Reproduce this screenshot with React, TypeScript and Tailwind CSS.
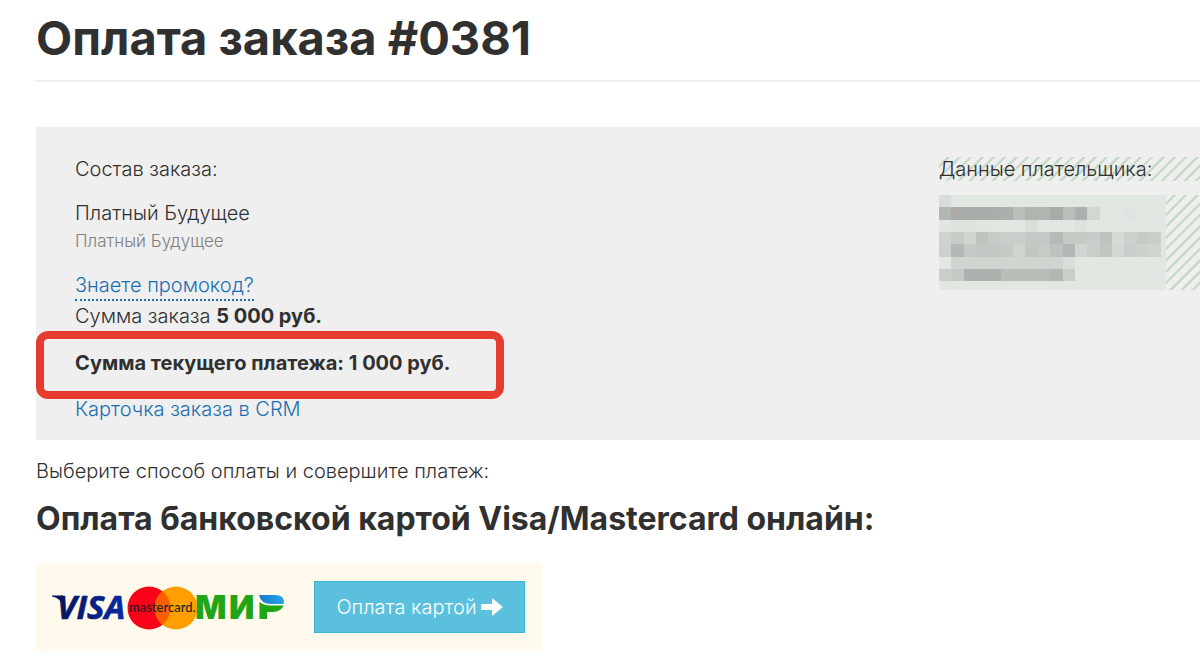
import React from 'react';

const maskRows = [
  ['#d8ddda'],
  ['#b2b7b2', '#abaaa8', '#a9adaa', '#a9adaa', '#a9aeaa', '#abb0ac', '#b9beb8', '#b1b5af', '#b1b5af', '#a8ada9', '#b9beb9', '#adb1ae', '#d2d7d2', '#e1e8e1', '#e1e8e1', '#dfe5e1'],
  ['#e1e6e0', '#dee3dd', '#dee3dd', '#e0e5df', '#e1e6e0', '#e1e8e1', '#e1e8e1', '#d9dfd9', '#e1e8e1', '#e1e8e1', '#e1e8e1', '#dce2dc'],
  ['#cdd3cf', '#c7cdc6', '#d0d6d0', '#bfc5be', '#c6ccc5', '#c8cec9', '#c9cfca', '#c3cac5', '#c3cac5', '#b4bab5', '#c5cac4', '#c5cac4', '#c7cdc8', '#bfc4bf', '#d4dad4', '#cbd1cb', '#c5cbc5', '#c9cfc9'],
  ['#cbd1cc', '#b3b9b4', '#c4cac4', '#c2c8c2', '#c2c8c3', '#c6ccc5', '#ced4ce', '#c1c7c1', '#c5cbc5', '#bdc3be', '#b2b9b5', '#d0d6d0', '#c9cfc8', '#c0c6c0', '#d2d8d2', '#cacfcb', '#ccd2cc', '#ced4ce'],
  ['#e1e8e1', '#cfd5cf', '#cfd5cf', '#cfd5cf', '#cfd5cf', '#cfd5cf', '#cfd5cf', '#cfd5cf', '#cfd5cf', '#cfd5cf', '#d8dedb'],
  ['#c8cec9', '#c4cac4', '#acb2ae', '#abb1ad', '#abb1ad', '#b7bdb7', '#b7bdb7', '#b7bdb7', '#b7bdb7', '#b1b7b2', '#c9cfc9'],
];

function MaskedDetails() {
  return (
    <svg className="block shrink-0" width="227" height="95" viewBox="0 0 227 95" shapeRendering="crispEdges" aria-hidden="true">
      <rect width="227" height="95" fill="#e1e8e1" />
      {maskRows.map((row, y) =>
        row.map((fill, x) => (
          <rect key={`${x}-${y}`} x={x * 12.35} y={y * 12.35} width="12.35" height="12.35" fill={fill} />
        ))
      )}
    </svg>
  );
}

function CardLogos() {
  return (
    <svg width="234" height="46" viewBox="0 0 234 46" role="img" aria-label="Visa, Mastercard, Мир">
      <defs>
        <linearGradient id="visa" x1="0" x2="1">
          <stop offset="0" stopColor="#06145c" />
          <stop offset="1" stopColor="#0a2aa5" />
        </linearGradient>
        <linearGradient id="mir" x1="0" x2="1">
          <stop offset="0" stopColor="#1a78d0" />
          <stop offset="1" stopColor="#27a5e8" />
        </linearGradient>
      </defs>
      <circle cx="97" cy="24" r="21.5" fill="#fb0019" />
      <circle cx="124" cy="24" r="21.5" fill="#ff9f00" />
      <path d="M110.5 7.300A21.5 21.5 0 0 1 110.5 40.700A21.5 21.5 0 0 1 110.5 7.300Z" fill="#ff5f00" />
      <path d="M0 11.400H11L12 24Q9 14 0 12.500Z" fill="#06145c" />
      <text x="5" y="35" fontFamily="Open Sans, sans-serif" fontWeight="700" fontStyle="italic" fontSize="33" fill="url(#visa)" stroke="url(#visa)" strokeWidth=".7">VISA</text>
      <text x="77" y="28" fontFamily="Lato, sans-serif" fontSize="13" fontWeight="500" fill="#231f20">mastercard.</text>
      <text x="143" y="35" fontFamily="Inter, sans-serif" fontWeight="900" fontSize="33" fill="#20a516">М</text>
      <text x="177" y="35" fontFamily="Inter, sans-serif" fontWeight="900" fontSize="33" fill="#20a516">И</text>
      <path d="M207 11H223Q231 11 232 17Q232 19 231.500 20H219Q209 20 207 11Z" fill="url(#mir)" />
      <path d="M207.500 18Q212 21.500 219 21.500H231.500Q229 28 221 28H215V35H207.500Z" fill="#20a516" />
    </svg>
  );
}

function ArrowRight() {
  return (
    <svg className="shrink-0" width="22" height="18" viewBox="0 0 22 18" fill="currentColor" aria-hidden="true">
      <path d="M0 6.500Q0 6 .5 6H11V1.200Q11 0 12 .8L21.300 8.400Q22 9 21.300 9.600L12 17.200Q11 18 11 16.800V12H.5Q0 12 0 11.500Z" />
    </svg>
  );
}

export default function App() {
  return (
    <div className="pl-9 pt-3 text-xl leading-7 font-light text-[#303030] font-[Inter,sans-serif]">
      <h1 className="text-[47px] leading-[52px] font-bold">Оплата заказа #0381</h1>
      <hr className="mt-4 border-t-2 border-[#eeeeee]" />

      <main>
        <section className="mt-[45px] flex bg-[#efefef] pt-7 pb-[17px] pl-[39px]">
          <div className="flex-1">
            <p>Состав заказа:</p>
            <p className="mt-4">Платный Будущее</p>
            <p className="text-[17px] text-[#808080]">Платный Будущее</p>
            <p className="mt-4">
              <a href="#promo" className="inline-block border-b-2 border-dotted border-[#1a6fb4] text-[#1a6fb4]">
                Знаете промокод?
              </a>
            </p>
            <p className="mt-px">
              Сумма заказа <b className="font-bold">5 000 руб.</b>
            </p>
            <p className="relative mt-[19px] font-bold">
              Сумма текущего платежа: 1 000 руб.
              <span className="absolute -top-[18px] -left-[39px] h-[68px] w-[468px] rounded-xl border-8 border-[#e63c30]" />
            </p>
            <p className="mt-[18px]">
              <a href="#crm" className="text-[#1a6fb4]">Карточка заказа в CRM</a>
            </p>
          </div>

          <div className="w-[261px]">
            <h2 className="mt-[2px] bg-[repeating-linear-gradient(135deg,transparent_0_5px,#c9dac9_6px_8px)] leading-6 whitespace-nowrap">
              Данные плательщика:
            </h2>
            <div className="mt-[14px] flex bg-[repeating-linear-gradient(135deg,transparent_0_5px,#c9dac9_6px_8px)]">
              <MaskedDetails />
            </div>
          </div>
        </section>

        <p className="mt-[17px]">Выберите способ оплаты и совершите платеж:</p>
        <h2 className="mt-[14px] text-[32px] leading-10 font-bold">Оплата банковской картой Visa/Mastercard онлайн:</h2>

        <div className="mt-6 flex w-fit items-center gap-7 bg-[#fffaeb] py-[18px] pr-4 pl-4">
          <CardLogos />
          <button type="button" className="flex h-[52px] w-[211px] items-center justify-center gap-1 border border-[#3db3d7] bg-[#5bc0de] whitespace-nowrap text-white">
            Оплата картой
            <ArrowRight />
          </button>
        </div>
      </main>
    </div>
  );
}
